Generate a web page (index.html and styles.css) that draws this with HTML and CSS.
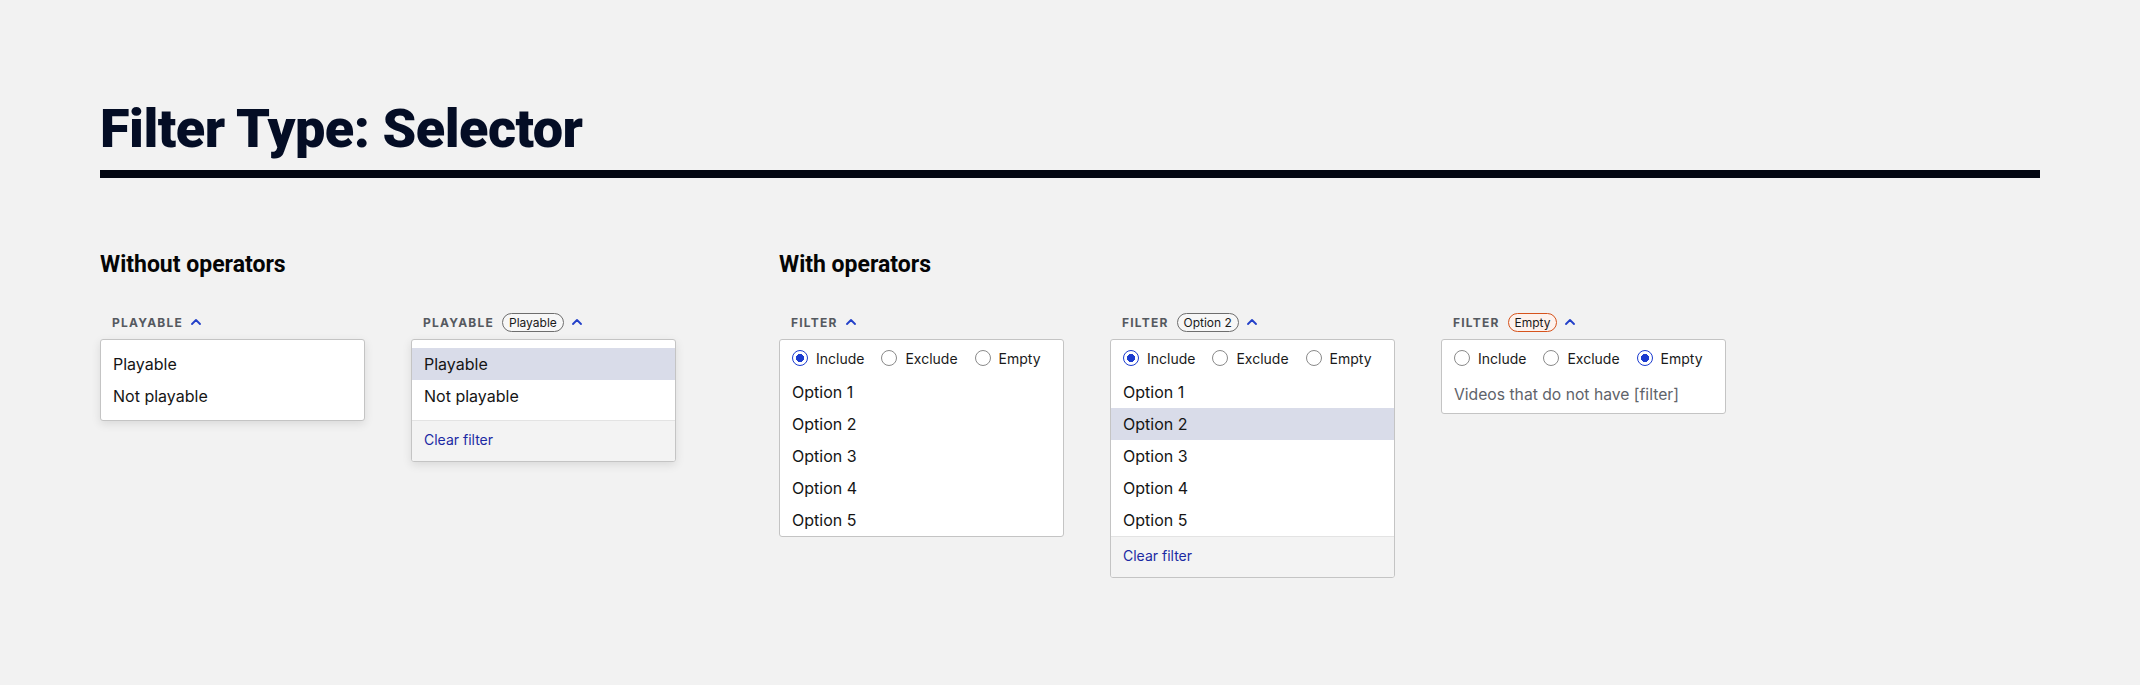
FILE: index.html
```html
<!DOCTYPE html>
<html lang="en">
<head>
  <meta charset="UTF-8" />
  <meta name="viewport" content="width=device-width, initial-scale=1.0"/>
  <title>Filter Type: Selector</title>
  <link rel="stylesheet" href="styles.css">
</head>
<body>

  <h1>Filter Type: Selector</h1>

  <div class="sections">

    <div class="section">
      <h2>Without operators</h2>
      <div class="filters">

        <div class="filter narrow">
          <div class="filter-head">
            <span class="label">Playable</span>
            <svg class="chevron" width="10" height="6" viewBox="0 0 10 6"><polyline points="1,5 5,1 9,5"/></svg>
          </div>
          <div class="card shadow">
            <ul class="options padded">
              <li>Playable</li>
              <li>Not playable</li>
            </ul>
          </div>
        </div>

        <div class="filter narrow">
          <div class="filter-head">
            <span class="label">Playable</span>
            <span class="badge">Playable</span>
            <svg class="chevron" width="10" height="6" viewBox="0 0 10 6"><polyline points="1,5 5,1 9,5"/></svg>
          </div>
          <div class="card shadow">
            <ul class="options padded">
              <li class="selected">Playable</li>
              <li>Not playable</li>
            </ul>
            <div class="card-foot"><a href="#">Clear filter</a></div>
          </div>
        </div>

      </div>
    </div>

    <div class="section">
      <h2>With operators</h2>
      <div class="filters">

        <div class="filter">
          <div class="filter-head">
            <span class="label">Filter</span>
            <svg class="chevron" width="10" height="6" viewBox="0 0 10 6"><polyline points="1,5 5,1 9,5"/></svg>
          </div>
          <div class="card">
            <div class="operators">
              <label class="radio"><span class="dot checked"></span>Include</label>
              <label class="radio"><span class="dot"></span>Exclude</label>
              <label class="radio"><span class="dot"></span>Empty</label>
            </div>
            <ul class="options">
              <li>Option 1</li>
              <li>Option 2</li>
              <li>Option 3</li>
              <li>Option 4</li>
              <li>Option 5</li>
            </ul>
          </div>
        </div>

        <div class="filter">
          <div class="filter-head">
            <span class="label">Filter</span>
            <span class="badge">Option 2</span>
            <svg class="chevron" width="10" height="6" viewBox="0 0 10 6"><polyline points="1,5 5,1 9,5"/></svg>
          </div>
          <div class="card">
            <div class="operators">
              <label class="radio"><span class="dot checked"></span>Include</label>
              <label class="radio"><span class="dot"></span>Exclude</label>
              <label class="radio"><span class="dot"></span>Empty</label>
            </div>
            <ul class="options">
              <li>Option 1</li>
              <li class="selected">Option 2</li>
              <li>Option 3</li>
              <li>Option 4</li>
              <li>Option 5</li>
            </ul>
            <div class="card-foot"><a href="#">Clear filter</a></div>
          </div>
        </div>

        <div class="filter">
          <div class="filter-head">
            <span class="label">Filter</span>
            <span class="badge empty">Empty</span>
            <svg class="chevron" width="10" height="6" viewBox="0 0 10 6"><polyline points="1,5 5,1 9,5"/></svg>
          </div>
          <div class="card">
            <div class="operators">
              <label class="radio"><span class="dot"></span>Include</label>
              <label class="radio"><span class="dot"></span>Exclude</label>
              <label class="radio"><span class="dot checked"></span>Empty</label>
            </div>
            <p class="hint">Videos that do not have [filter]</p>
          </div>
        </div>

      </div>
    </div>

  </div>

</body>
</html>
```

FILE: styles.css
```css
body {
  margin: 0;
  padding: 102px 100px 0;
  background: #f2f2f2;
  font-family: Inter, "Noto Sans", sans-serif;
  color: #111;
}

h1 {
  margin: 0;
  padding-bottom: 14px;
  border-bottom: 8px solid #030712;
  font-family: Roboto, "Liberation Sans", sans-serif;
  font-weight: 900;
  font-size: 54px;
  line-height: 1;
  letter-spacing: -0.5px;
  color: #040d25;
}

.sections {
  display: flex;
  gap: 103px;
  margin-top: 75px;
}

h2 {
  margin: 0 0 36px;
  font-family: Roboto, "Liberation Sans", sans-serif;
  font-weight: 700;
  font-size: 23px;
  line-height: 1;
  color: #050505;
}

.filters {
  display: flex;
  align-items: flex-start;
  gap: 46px;
}

.filter {
  width: 285px;
}

.filter.narrow {
  width: 265px;
}

.filter-head {
  display: flex;
  align-items: center;
  gap: 8px;
  height: 20px;
  padding-left: 12px;
  margin-bottom: 7px;
}

.label {
  font-size: 12px;
  font-weight: 700;
  letter-spacing: 1.2px;
  text-transform: uppercase;
  color: #55595f;
}

.badge {
  font-size: 12px;
  line-height: 17px;
  padding: 0 6px;
  border: 1px solid #6e6e6e;
  border-radius: 10px;
  color: #1a1a1a;
  background: #f7f7f7;
}

.badge.empty {
  border-color: #d6531c;
  background: #fdf2ed;
}

.chevron {
  fill: none;
  stroke: #2340c9;
  stroke-width: 1.8;
  stroke-linecap: round;
  stroke-linejoin: round;
}

.card {
  background: white;
  border: 1px solid #c4c4c4;
  border-radius: 3px;
  overflow: hidden;
}

.card.shadow {
  box-shadow: 0 3px 10px rgba(0,0,0,0.1);
}

.options {
  list-style: none;
  margin: 0;
  padding: 0;
}

.options.padded {
  padding: 8px 0;
}

.options li {
  height: 32px;
  line-height: 32px;
  padding: 0 12px;
  font-size: 16px;
  color: #151515;
}

.options li.selected {
  background: #d9dce9;
}

.card-foot {
  height: 36px;
  line-height: 36px;
  padding: 0 12px 4px;
  background: #f3f3f3;
  border-top: 1px solid #e3e3e3;
}

.card-foot a {
  font-size: 14px;
  color: #1b2aa3;
  text-decoration: none;
}

.operators {
  display: flex;
  align-items: center;
  gap: 17px;
  height: 36px;
  padding: 0 12px;
}

.radio {
  display: flex;
  align-items: center;
  gap: 8px;
  font-size: 14px;
  color: #1a1a1a;
}

.dot {
  box-sizing: border-box;
  width: 16px;
  height: 16px;
  border: 1px solid #8a8a8a;
  border-radius: 50%;
  background: white;
}

.dot.checked {
  border: 1.5px solid #1b3bcf;
  background: radial-gradient(circle, #1b3bcf 0 3.8px, white 4.3px);
}

.hint {
  margin: 0;
  height: 37px;
  line-height: 37px;
  padding: 0 12px;
  font-size: 15.7px;
  color: #5f636a;
}
```
